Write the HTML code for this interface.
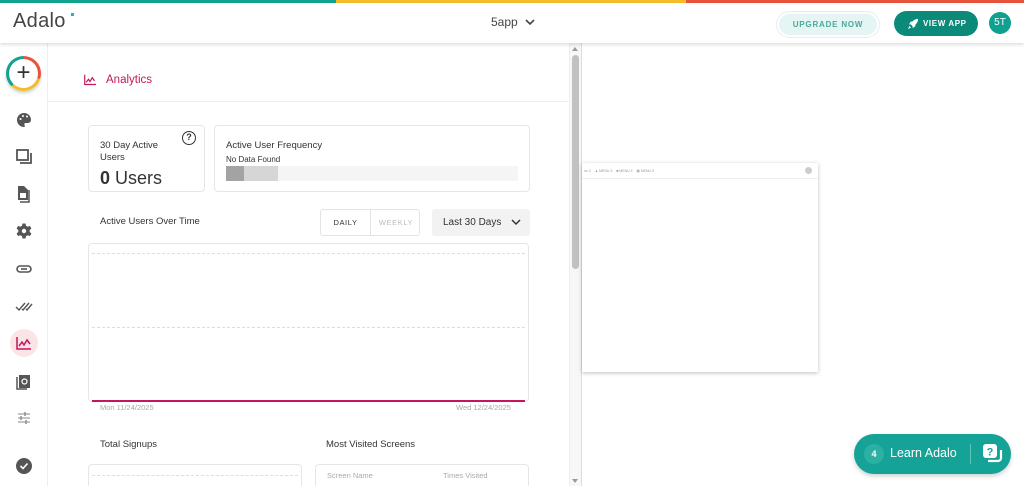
<!DOCTYPE html>
<html><head><style>
*{box-sizing:border-box;margin:0;padding:0}
html{width:1024px;height:486px;overflow:hidden}
body{width:1024px;height:486px;overflow:hidden;background:#fff;font-family:"Liberation Sans",sans-serif;position:relative;color:#333}
.abs{position:absolute}
.card{position:absolute;border:1px solid #e6e6e6;border-radius:4px;background:#fff}
.ic{position:absolute;left:15px;width:18px;height:18px}
</style></head><body>
<div class="abs" style="left:0;top:0;width:336px;height:3px;background:#12a38f"></div>
<div class="abs" style="left:336px;top:0;width:350px;height:3px;background:#f4bc2a"></div>
<div class="abs" style="left:686px;top:0;width:338px;height:3px;background:#e8533b"></div>
<div class="abs" style="left:0;top:3px;width:1024px;height:40px;background:#fff;box-shadow:0 2px 3px rgba(0,0,0,.12);z-index:2">
  <div class="abs" style="left:13px;top:7px;font-size:20px;color:#444;letter-spacing:.3px">Adalo</div>
  <div class="abs" style="left:71px;top:10px;width:3px;height:3px;background:#1bb;"></div>
  <div class="abs" style="left:491px;top:12px;font-size:12px;color:#444">5app</div>
  <svg class="abs" style="left:525px;top:15px" width="10" height="8"><path d="M1 2l4 4 4-4" stroke="#444" stroke-width="1.6" fill="none"/></svg>
  <div class="abs" style="left:776px;top:8px;width:104px;height:27px;border-radius:14px;border:1px solid #e6eeee;padding:2px"><div style="width:100%;height:100%;border-radius:12px;background:#e4f5f3;color:#4aa89c;font-size:8px;font-weight:bold;letter-spacing:.8px;text-align:center;line-height:21px">UPGRADE NOW</div></div>
  <div class="abs" style="left:894px;top:8px;width:84px;height:25px;border-radius:13px;background:#0b8a79;color:#fff;font-size:8px;font-weight:bold;letter-spacing:.6px;line-height:25px;padding-left:29px">VIEW APP</div>
  <svg class="abs" style="left:908px;top:15px" width="11" height="11" viewBox="0 0 12 12"><path d="M11 1C7 1 4 4 3 7l2 2c3-1 6-4 6-8z" fill="#fff"/><path d="M3 7L1 7l2-3h2M5 9v2l3-2V7" fill="#fff"/><path d="M2 9l-1 2 2-1" stroke="#fff" fill="none"/></svg>
  <div class="abs" style="left:989px;top:9px;width:22px;height:22px;border-radius:50%;background:#0fa08f;color:#fff;font-size:10px;text-align:center;line-height:22px">5T</div>
</div>
<div class="abs" style="left:47px;top:43px;width:1px;height:443px;background:#eee"></div>
<div class="abs" style="left:6px;top:56px;width:35px;height:35px;border-radius:50%;background:conic-gradient(#e8533b 0 30%,#f4bc2a 30% 62%,#12a38f 62% 100%);box-shadow:0 2px 3px rgba(0,0,0,.2)"><div style="position:absolute;left:3px;top:3px;width:29px;height:29px;border-radius:50%;background:#fff;text-align:center;line-height:28px;font-size:24px;color:#333">+</div></div>
<svg class="ic" style="top:111px" viewBox="0 0 18 18"><path d="M9 2a7 7 0 000 14c1 0 1-1 .5-2s0-2 1.5-2h2a3 3 0 003-3c0-4-3-7-7-7z" fill="#555"/><circle cx="5.5" cy="8" r="1" fill="#fff"/><circle cx="8" cy="5" r="1" fill="#fff"/><circle cx="12" cy="5.5" r="1" fill="#fff"/></svg>
<svg class="ic" style="top:148px" viewBox="0 0 18 18"><rect x="2" y="2" width="11" height="10" fill="none" stroke="#555" stroke-width="1.8"/><path d="M5 15h11V5" fill="none" stroke="#555" stroke-width="1.8"/></svg>
<svg class="ic" style="top:185px" viewBox="0 0 18 18"><path d="M3 1h6l4 4v10H3z" fill="#555"/><path d="M14 5v12H5" fill="none" stroke="#555" stroke-width="1.5"/><rect x="5" y="8" width="6" height="5" fill="#fff"/></svg>
<svg class="ic" style="top:222px" viewBox="0 0 18 18"><path d="M7.5 1.5h3l.5 2.2 1.8 1 2.1-.8 1.5 2.6-1.7 1.5v2l1.7 1.5-1.5 2.6-2.1-.8-1.8 1-.5 2.2h-3l-.5-2.2-1.8-1-2.1.8-1.5-2.6 1.7-1.5v-2L1.6 6.5l1.5-2.6 2.1.8 1.8-1z" fill="#555"/><circle cx="9" cy="9" r="2.2" fill="#fff"/></svg>
<svg class="ic" style="top:260px" viewBox="0 0 18 18"><rect x="2" y="6" width="14" height="6" rx="3" fill="none" stroke="#555" stroke-width="1.6"/><path d="M6 9h6" stroke="#555" stroke-width="1.6"/></svg>
<svg class="ic" style="top:297px" viewBox="0 0 18 18"><path d="M1 10l3 3 6-7M7 12l1 1 6-7M11 12l1 1 5-6" fill="none" stroke="#555" stroke-width="1.4"/></svg>
<div class="abs" style="left:10px;top:329px;width:28px;height:28px;border-radius:50%;background:#fbe3e6"></div>
<svg class="ic" style="top:334px" viewBox="0 0 18 18"><path d="M2 3v12h14" fill="none" stroke="#c2185b" stroke-width="1.5"/><path d="M4 12l3-4 2 3 3-5 3 4" fill="none" stroke="#c2185b" stroke-width="1.5"/></svg>
<svg class="ic" style="top:372px" viewBox="0 0 18 18"><rect x="4" y="3" width="11" height="13" fill="#555"/><path d="M2 5v12h10" fill="none" stroke="#555" stroke-width="1.5"/><circle cx="9.5" cy="9.5" r="2.5" fill="none" stroke="#fff" stroke-width="1.2"/></svg>
<svg class="ic" style="top:409px" viewBox="0 0 18 18"><path d="M3 5h12M3 9h12M3 13h12" stroke="#888" stroke-width="1"/><path d="M10 3v4M6 7v4M11 11v4" stroke="#888" stroke-width="1.4"/></svg>
<svg class="ic" style="top:457px" viewBox="0 0 18 18"><circle cx="9" cy="9" r="8" fill="#555"/><path d="M5.5 9l2.5 2.5 4.5-5" fill="none" stroke="#fff" stroke-width="1.6"/></svg>
<svg class="abs" style="left:83px;top:74px" width="14" height="12" viewBox="0 0 18 16"><path d="M2 1v13h15" fill="none" stroke="#c2185b" stroke-width="1.6"/><path d="M4 11l3-4 2 3 3-5 3 4" fill="none" stroke="#c2185b" stroke-width="1.6"/></svg>
<div class="abs" style="left:106px;top:74px;font-size:11.5px;color:#c2185b">Analytics</div>
<div class="abs" style="left:48px;top:101px;width:522px;height:1px;background:#eee"></div>
<div class="card" style="left:88px;top:125px;width:117px;height:67px">
  <div class="abs" style="left:11px;top:14px;font-size:9.5px;line-height:12px;color:#333">30 Day Active<br>Users</div>
  <div class="abs" style="left:11px;top:42px;font-size:18px;color:#333"><b>0</b> Users</div>
  <div class="abs" style="left:93px;top:5px;width:14px;height:14px;border:1.5px solid #333;border-radius:50%;font-size:9px;font-weight:bold;text-align:center;line-height:11px">?</div>
</div>
<div class="card" style="left:214px;top:125px;width:316px;height:67px">
  <div class="abs" style="left:11px;top:14px;font-size:9.5px">Active User Frequency</div>
  <div class="abs" style="left:11px;top:29px;font-size:8px">No Data Found</div>
  <div class="abs" style="left:11px;top:40px;width:292px;height:15px;background:#f5f5f5"></div>
  <div class="abs" style="left:11px;top:40px;width:52px;height:15px;background:#d6d6d6"></div>
  <div class="abs" style="left:11px;top:40px;width:18px;height:15px;background:#a3a3a3"></div>
</div>
<div class="abs" style="left:100px;top:216px;font-size:9.5px">Active Users Over Time</div>
<div class="abs" style="left:320px;top:209px;width:100px;height:27px;border:1px solid #e3e3e3;border-radius:3px">
  <div class="abs" style="left:0;top:0;width:50px;height:25px;border-right:1px solid #e3e3e3;font-size:7.5px;letter-spacing:.6px;text-align:center;line-height:25px">DAILY</div>
  <div class="abs" style="left:50px;top:0;width:50px;height:25px;font-size:7.5px;letter-spacing:.6px;text-align:center;line-height:25px;color:#bbb">WEEKLY</div>
</div>
<div class="abs" style="left:432px;top:209px;width:98px;height:27px;background:#f2f2f2;border-radius:3px;font-size:10px;line-height:27px;padding-left:11px">Last 30 Days</div>
<svg class="abs" style="left:511px;top:219px" width="10" height="7"><path d="M1 1l4 4 4-4" stroke="#333" stroke-width="1.5" fill="none"/></svg>
<div class="card" style="left:88px;top:243px;width:441px;height:159px">
  <div class="abs" style="left:3px;top:9px;width:433px;border-top:1px dashed #ddd"></div>
  <div class="abs" style="left:3px;top:83px;width:433px;border-top:1px dashed #ddd"></div>
  <div class="abs" style="left:3px;top:156px;width:433px;height:2px;background:#c2185b"></div>
</div>
<div class="abs" style="left:100px;top:403px;font-size:7.5px;color:#aaa">Mon 11/24/2025</div>
<div class="abs" style="left:456px;top:403px;font-size:7.5px;color:#aaa">Wed 12/24/2025</div>
<div class="abs" style="left:100px;top:439px;font-size:9.5px">Total Signups</div>
<div class="abs" style="left:326px;top:439px;font-size:9.5px">Most Visited Screens</div>
<div class="abs" style="left:88px;top:464px;width:214px;height:22px;border:1px solid #e6e6e6;border-bottom:none;border-radius:4px 4px 0 0"><div class="abs" style="left:3px;top:10px;width:206px;border-top:1px dashed #ddd"></div></div>
<div class="abs" style="left:315px;top:464px;width:214px;height:22px;border:1px solid #e6e6e6;border-bottom:none;border-radius:4px 4px 0 0">
  <div class="abs" style="left:11px;top:6px;font-size:7.5px;color:#aaa">Screen Name</div>
  <div class="abs" style="left:127px;top:6px;font-size:7.5px;color:#aaa">Times Visited</div>
</div>
<div class="abs" style="left:569px;top:43px;width:13px;height:443px;background:#f7f7f7;border-left:1px solid #eee;border-right:1px solid #ddd"></div>
<div class="abs" style="left:572px;top:55px;width:7px;height:214px;background:#c1c1c1;border-radius:4px"></div>
<div class="abs" style="left:572px;top:47px;width:0;height:0;border:3.5px solid transparent;border-bottom:4px solid #999;border-top:none"></div>
<div class="abs" style="left:572px;top:479px;width:0;height:0;border:3.5px solid transparent;border-top:4px solid #999;border-bottom:none"></div>
<div class="abs" style="left:582px;top:163px;width:236px;height:209px;background:#fff;box-shadow:0 1px 4px rgba(0,0,0,.25)">
  <div class="abs" style="left:0;top:0;width:236px;height:16px;border-bottom:1px solid #f0f0f0;font-size:3.5px;color:#999;line-height:16px;padding-left:2px">nu 2 &nbsp;&nbsp; ▲ MENU 3 &nbsp;&nbsp; ■ MENU 4 &nbsp;&nbsp; ▦ MENU 5</div>
  <div class="abs" style="left:223px;top:4px;width:7px;height:7px;border-radius:50%;background:#ccc"></div>
</div>
<div class="abs" style="left:854px;top:434px;width:157px;height:40px;border-radius:20px;background:#14a396;box-shadow:0 2px 5px rgba(0,0,0,.2)">
  <div class="abs" style="left:10px;top:10px;width:20px;height:20px;border-radius:50%;background:#2db0a4;color:#fff;font-size:9px;font-weight:bold;text-align:center;line-height:20px">4</div>
  <div class="abs" style="left:36px;top:12px;color:#fff;font-size:12.5px">Learn Adalo</div>
  <div class="abs" style="left:116px;top:10px;width:1px;height:20px;background:#5ec4ba"></div>
  <svg class="abs" style="left:127px;top:8px" width="22" height="22" viewBox="0 0 22 22"><path d="M7 19h10a3 3 0 003-3V8" fill="none" stroke="#fff" stroke-width="2.2"/><rect x="2" y="2" width="14" height="14" rx="3" fill="#fff"/><text x="9" y="13.5" font-size="11" font-weight="bold" text-anchor="middle" fill="#14a396" font-family="Liberation Sans">?</text></svg>
</div>
</body></html>
